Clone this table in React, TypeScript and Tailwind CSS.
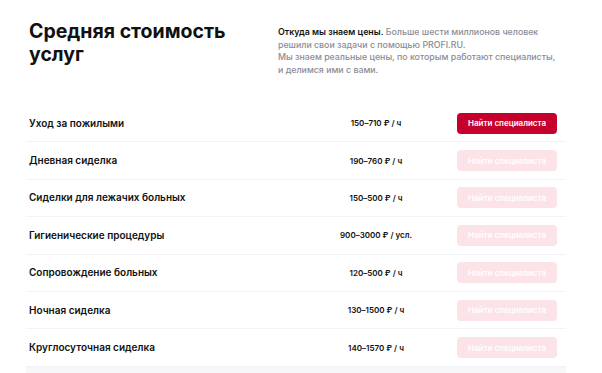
import React from "react";

type Row = { name: string; price: string; active?: boolean };

const rows: Row[] = [
  { name: "Уход за пожилыми", price: "150–710 ₽ / ч", active: true },
  { name: "Дневная сиделка", price: "190–760 ₽ / ч" },
  { name: "Сиделки для лежачих больных", price: "150–500 ₽ / ч" },
  { name: "Гигиенические процедуры", price: "900–3000 ₽ / усл." },
  { name: "Сопровождение больных", price: "120–500 ₽ / ч" },
  { name: "Ночная сиделка", price: "130–1500 ₽ / ч" },
  { name: "Круглосуточная сиделка", price: "140–1570 ₽ / ч" },
];

const App: React.FC = () => {
  return (
    <div
      className="h-[373px] w-[602px] overflow-hidden bg-white"
      style={{ fontFamily: "Inter, 'Noto Sans', sans-serif" }}
    >
      <div className="ml-[26px] w-[540px]">
        {/* Шапка */}
        <div className="flex pt-[16px]">
          <h1 className="w-[252px] pl-[3px] pt-[4px] text-[19.5px] font-bold leading-[23px] text-[#111]">
            Средняя стоимость
            <br />
            услуг
          </h1>
          <p className="whitespace-nowrap pt-[10px] text-[8.8px] font-medium leading-[12.5px] text-[#8c8c96]">
            <span className="font-semibold text-[#111]">Откуда мы знаем цены.</span> Больше шести миллионов человек
            <br />
            решили свои задачи с помощью PROFI.RU.
            <br />
            Мы знаем реальные цены, по которым работают специалисты,
            <br />
            и делимся ими с вами.
          </p>
        </div>

        {/* Таблица */}
        <div className="mt-[29px]">
          {rows.map((r) => (
            <div
              key={r.name}
              className="flex h-[37.4px] items-center border-b-[1.5px] border-[#f2f2f7] pl-[3px] pr-[9px]"
            >
              <div className="flex-1 text-[10px] font-semibold text-[#111]">{r.name}</div>
              <div className="w-[130px] text-center text-[8px] font-semibold text-[#111]">{r.price}</div>
              <button
                className={
                  r.active
                    ? "ml-[16px] h-[21px] w-[100px] rounded-[4px] bg-[#c5002d] text-[8px] font-semibold text-white"
                    : "ml-[16px] h-[21px] w-[100px] rounded-[4px] bg-[#fbe3e8] text-[8px] font-semibold text-white"
                }
              >
                Найти специалиста
              </button>
            </div>
          ))}
          <div className="h-[20px] bg-[#f7f7fa]" />
        </div>
      </div>
    </div>
  );
};

export default App;
